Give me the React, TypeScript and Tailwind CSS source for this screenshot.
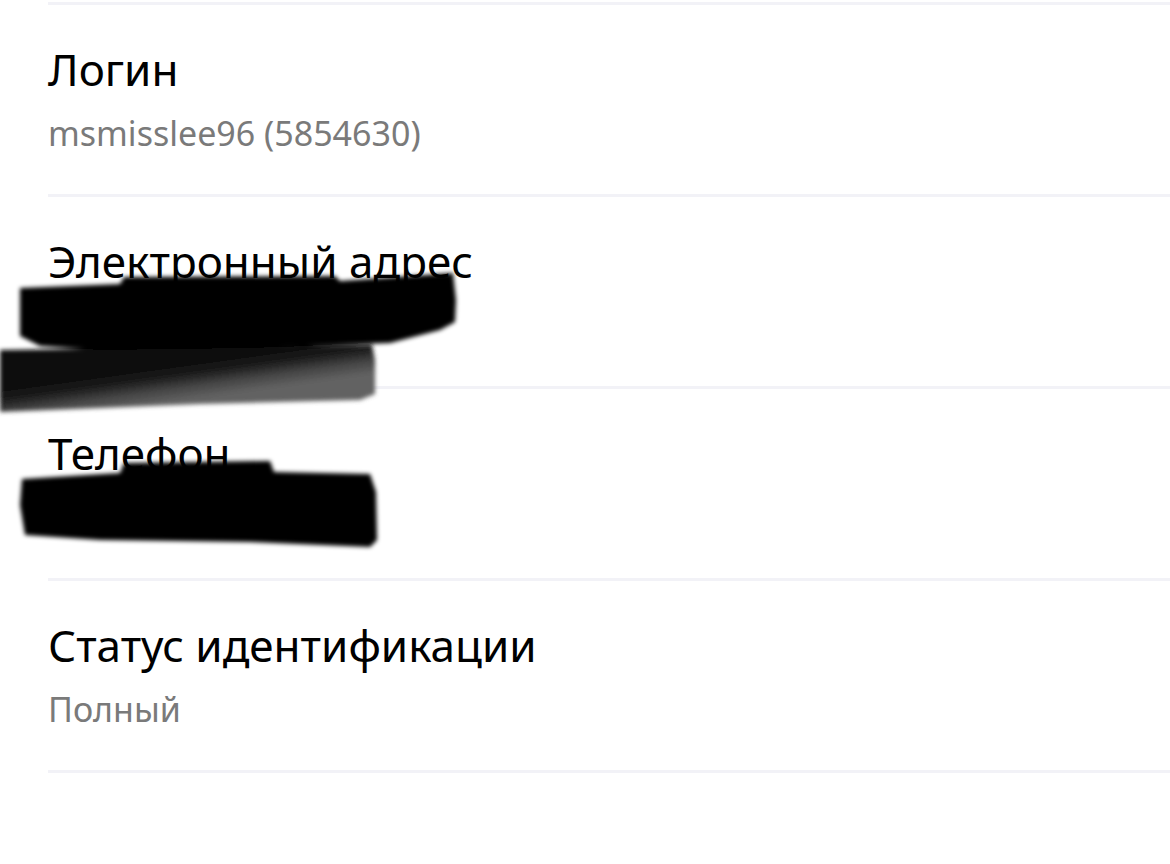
import React from "react";

const rows = [
  { title: "Логин", value: "msmisslee96 (5854630)" },
  { title: "Электронный адрес", value: "" },
  { title: "Телефон", value: "" },
  { title: "Статус идентификации", value: "Полный" },
];

function Divider() {
  return <div className="h-[3px] bg-[#f2f2f7]" />;
}

function Scribbles() {
  return (
    <svg
      className="pointer-events-none absolute left-0 top-0"
      width="1170"
      height="864"
      viewBox="0 0 1170 864"
    >
      <defs>
        <filter id="soft" x="-10%" y="-10%" width="120%" height="120%">
          <feGaussianBlur stdDeviation="2" />
        </filter>
        <linearGradient
          id="greyband"
          gradientUnits="userSpaceOnUse"
          x1="182"
          y1="364"
          x2="187"
          y2="400"
        >
          <stop offset="0" stopColor="#0e0e0e" />
          <stop offset="0.3" stopColor="#1c1c1c" />
          <stop offset="0.65" stopColor="#464646" />
          <stop offset="1" stopColor="#626262" />
        </linearGradient>
      </defs>
      <g filter="url(#soft)">
        {/* email: lower band */}
        <path
          d="M0 350 L150 348 L372 345 L375 360 L375 394 L360 400 L200 404 L0 412 Z"
          fill="url(#greyband)"
        />
        {/* email: top band */}
        <path
          d="M20 288 L120 284 L124 277 L335 276 L340 281 L453 273 L456 300 L455 322 L440 330 L390 343 L250 348 L100 350 L40 346 L20 336 Z"
          fill="#000"
        />
        {/* phone */}
        <path
          d="M22 479 L120 473 L124 463 L270 461 L274 472 L370 474 L376 492 L377 540 L370 547 L250 542 L100 540 L25 535 L20 505 Z"
          fill="#000"
        />
      </g>
    </svg>
  );
}

export default function App() {
  return (
    <div
      className="relative h-[864px] w-full overflow-hidden bg-white"
      style={{ fontFamily: '"Noto Sans", "Open Sans", sans-serif' }}
    >
      <div className="pl-12 pt-[2px]">
        {rows.map((r) => (
          <div key={r.title}>
            <Divider />
            <div className="h-[189px] pt-[38px]">
              <div className="text-[44px] leading-[52px] text-black">{r.title}</div>
              {r.value && (
                <div className="mt-[18px] text-[34px] leading-[40px] text-[#7a7a7a]">
                  {r.value}
                </div>
              )}
            </div>
          </div>
        ))}
        <Divider />
      </div>
      <Scribbles />
    </div>
  );
}
